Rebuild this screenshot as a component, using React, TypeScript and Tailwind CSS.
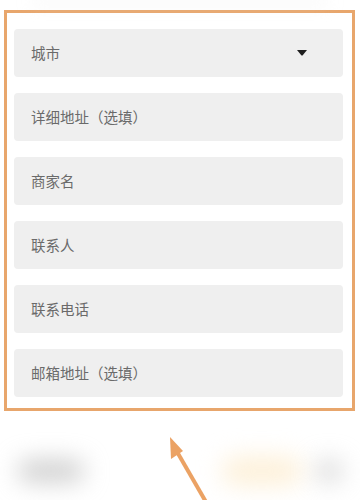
import React from "react";

const fields = [
  { label: "城市", select: true },
  { label: "详细地址（选填）" },
  { label: "商家名" },
  { label: "联系人" },
  { label: "联系电话" },
  { label: "邮箱地址（选填）" },
];

export default function App() {
  return (
    <div
      className="relative w-[360px] h-[500px] overflow-hidden bg-white"
      style={{ fontFamily: '"Noto Sans CJK SC", "Noto Sans", sans-serif' }}
    >
      {/* faint blurred strip above the form */}
      <div className="h-[10px] flex items-start px-8">
        <div className="h-[4px] w-[300px] bg-[#e6e6e6]/60 blur-sm" />
      </div>

      {/* highlighted form */}
      <div className="ml-[4px] w-[351px] h-[401px] border-[3px] border-[#e8a66c] pl-[7px] pr-[9px] pt-[16px] flex flex-col gap-4">
        {fields.map((f) => (
          <div
            key={f.label}
            className="h-[48px] shrink-0 rounded-[4px] bg-[#efefef] flex items-center justify-between pl-[17px] pr-[36px]"
          >
            <span className="text-[14.5px] text-[#6a6a6a]">{f.label}</span>
            {f.select && (
              <svg width="10" height="6" viewBox="0 0 10 6">
                <path d="M0 0 H10 L5.5 5.5 H4.5 Z" fill="#1f1f1f" />
              </svg>
            )}
          </div>
        ))}
      </div>

      {/* blurred bottom bar */}
      <div className="flex items-center mt-[40px] px-[18px] h-[40px]">
        <div className="w-[66px] h-[20px] rounded-full bg-[#bcbcbc]/80 blur-md" />
        <div className="ml-auto w-[80px] h-[28px] rounded-full bg-[#fdf0d8] blur-md" />
        <div className="ml-[14px] w-[26px] h-[22px] rounded-full bg-[#c4c4c4]/70 blur-md" />
      </div>

      {/* annotation arrow */}
      <svg
        className="absolute left-0 top-0 pointer-events-none"
        width="360"
        height="500"
        viewBox="0 0 360 500"
      >
        <line
          x1="206"
          y1="502"
          x2="176"
          y2="450"
          stroke="#eba264"
          strokeWidth="4"
        />
        <path d="M170 437 L183 451 L171 459 Z" fill="#eba264" />
      </svg>
    </div>
  );
}
